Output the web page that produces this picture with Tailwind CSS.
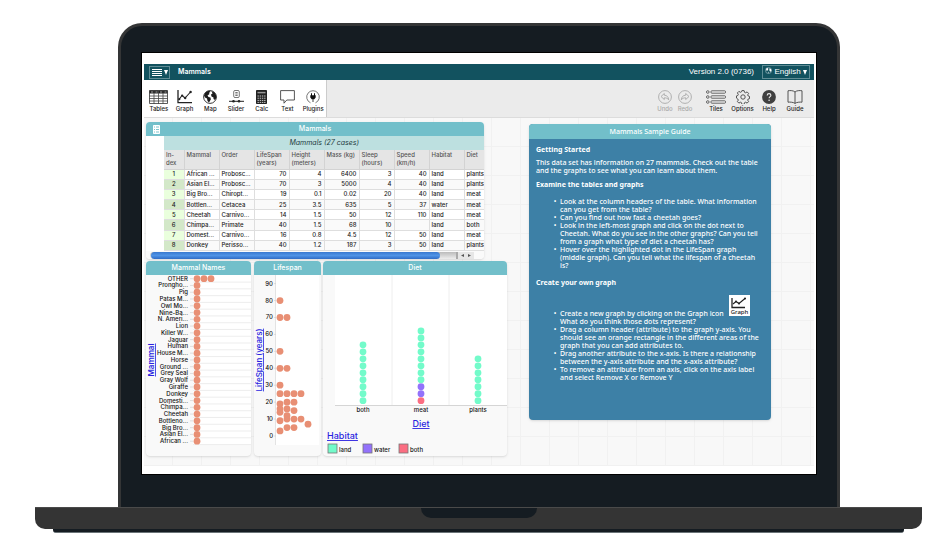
<!DOCTYPE html>
<html lang="en">
<head>
<meta charset="utf-8">
<meta name="viewport" content="width=device-width, initial-scale=1">
<title>Mammals</title>
<script src="https://cdn.jsdelivr.net/npm/@tailwindcss/browser@4"></script>
</head>
<body class="bg-white pt-[23px] pr-[19px] pl-[35px] font-['Inter',sans-serif] text-[7px] text-[#222]">

<!-- Laptop lid -->
<div class="mr-[82px] ml-[83px] rounded-t-[24px] border-3 border-b-0 border-[#343536] bg-[#151c22] px-5 pt-[26px] pb-8">
  <div class="border border-black bg-white px-0.5 pt-[11px] pb-2">

    <header class="flex h-4 items-center bg-[#12525f] pr-1 pl-[5px] text-white">
      <button aria-label="File menu" class="flex h-[13px] w-[21px] items-center justify-center gap-0.5 border border-[#5f8c95]">
        <svg class="h-[9px] w-2.5" viewBox="0 0 10 9" stroke="#fff" stroke-width="1"><path d="M0 1.500h10M0 3.500h10M0 5.500h10M0 7.500h10"/></svg>
        <svg class="h-[5px] w-1" viewBox="0 0 4 5" fill="#fff"><path d="M0 0h4L2 5z"/></svg>
      </button>
      <h1 class="ml-2 flex-1 font-semibold">Mammals</h1>
      <span class="mr-2 font-['Liberation_Sans',sans-serif] text-[8px]">Version 2.0 (0736)</span>
      <button class="flex h-3.5 w-12 items-center justify-center gap-0.5 border border-[#5f8c95] font-['Liberation_Sans',sans-serif] text-[8px]">
        <svg class="mb-1 size-[7px]" viewBox="0 0 8 8"><circle cx="4" cy="4" r="3.5" fill="none" stroke="#b9d0d4" stroke-width=".6"/><path d="M1 2l2-1 1 1-1 2-1 .5zM5 1.5l2 1 .4 2L6 5.500 5 4zM3.500 5l1 1-.5 1.300z" fill="#fff"/></svg>
        English
        <svg class="h-[5px] w-1" viewBox="0 0 4 5" fill="#fff"><path d="M0 0h4L2 5z"/></svg>
      </button>
    </header>

    <nav class="flex h-[38px] items-stretch border-b border-[#dcdcdc] bg-[#ebebeb] text-[6px] leading-[8px] font-medium">
      <div class="flex w-[183px] items-stretch border-r border-[#ccc] bg-white pl-0.5">
        <button class="flex flex-1 flex-col items-center pt-2.5">
          <svg class="h-[14px] w-[19px]" viewBox="0 0 19 14"><path d="M.5.5h18v13H.5z" fill="#fff" stroke="#333" stroke-width=".8"/><path d="M.5.500h18v3H.5z" fill="#222"/><path d="M2 2h2M6.500 2h2M11 2h2M15.500 2h2" stroke="#ddd" stroke-width=".7"/><path d="M5 0v14M9.500 0v14M14 0v14M0 6h19M0 8.500h19M0 11h19" stroke="#444" stroke-width=".8"/></svg>
          <span class="mt-px">Tables</span>
        </button>
        <button class="flex flex-1 flex-col items-center pt-2.5">
          <svg class="h-[14px] w-[15px]" viewBox="0 0 15 14" fill="none" stroke="#222"><path d="M1 0v12.700h14" stroke-width="1.300"/><path d="M2 9.500l3-4 3 2.500 5.500-6" stroke-width="1.100"/><g fill="#222" stroke="none"><circle cx="2.300" cy="9.200" r="1.100"/><circle cx="5.200" cy="5.500" r="1.100"/><circle cx="8.200" cy="8" r="1.200"/><circle cx="13.600" cy="2" r="1.200"/></g></svg>
          <span class="mt-px">Graph</span>
        </button>
        <button class="flex flex-1 flex-col items-center pt-2.5">
          <svg class="size-[14px]" viewBox="0 0 14 14"><circle cx="7" cy="7" r="6.400" fill="#fff" stroke="#222" stroke-width=".9"/><path d="M1 5.500C1.500 3 3.500 1 6 .8l1.500.7L6 3l.5 1-2 1.500L5.500 7l2 .5.300 2L6 12.500 4.500 11 4 8.500 2 7.500zM8.500 1l3 1.500L13 5l.3 3-1.300 2-1.500-1V7.500L8.500 6.500 8 4.500l1.500-1z" fill="#1c1c1c"/></svg>
          <span class="mt-px">Map</span>
        </button>
        <button class="flex flex-1 flex-col items-center pt-2.5">
          <svg class="h-[14px] w-[15px]" viewBox="0 0 15 14"><rect x="4.700" y=".5" width="5.600" height="7" rx="1.300" fill="#fff" stroke="#555" stroke-width=".8"/><path d="M6.300 2.500h2.400M6.300 4h2.400M6.300 5.500h2.400" stroke="#555" stroke-width=".8"/><path d="M0 11.300h15" stroke="#222" stroke-width="1"/><circle cx="4.500" cy="11.300" r="1.300" fill="#222"/><circle cx="10" cy="11.300" r="1.300" fill="#222"/></svg>
          <span class="mt-px">Slider</span>
        </button>
        <button class="flex flex-1 flex-col items-center pt-2.5">
          <svg class="h-[14px] w-[11px]" viewBox="0 0 11 14"><rect width="11" height="14" rx=".8" fill="#222"/><path d="M1.500 2.600h8" stroke="#999" stroke-width="1.500"/><path d="M1.500 6h8M1.500 8.200h8M1.500 10.400h8M1.500 12.400h8" stroke="#ddd" stroke-width=".9" stroke-dasharray="1.400 .8"/></svg>
          <span class="mt-px">Calc</span>
        </button>
        <button class="flex flex-1 flex-col items-center pt-2.5">
          <svg class="h-[14px] w-[15px]" viewBox="0 0 15 14" fill="#fff" stroke="#444" stroke-width=".9" stroke-linejoin="round"><path d="M.6.6h13.800v9.400H6.800L4 13.200V10H.6z"/></svg>
          <span class="mt-px">Text</span>
        </button>
        <button class="flex flex-1 flex-col items-center pt-2.5">
          <svg class="size-[14px]" viewBox="0 0 14 14"><path d="M4.500 12.800A6.300 6.300 0 1 1 9.500 12.800" fill="none" stroke="#555" stroke-width=".8"/><path d="M5 3.300h1v2h2v-2h1v2h.7v2.200L8.300 9.200H7.400V12h-.8V9.200H5.700L4.300 7.500V5.300H5z" fill="#111"/></svg>
          <span class="mt-px">Plugins</span>
        </button>
      </div>

      <div class="ml-auto flex items-stretch pr-1.5">
        <button disabled class="flex w-5 flex-col items-center pt-2.5 text-[#a9a9a9]">
          <svg class="size-[14px]" viewBox="0 0 14 14" fill="none" stroke="#a9a9a9" stroke-width=".9"><circle cx="7" cy="7" r="6.400"/><path d="M6.300 3.500L3 6.500l3.300 3V7.800c2 0 3.200.5 4.400 2C10.500 7 9 5.300 6.300 5.200z" stroke-linejoin="round"/></svg>
          <span class="mt-px">Undo</span>
        </button>
        <button disabled class="flex w-5 flex-col items-center pt-2.5 text-[#a9a9a9]">
          <svg class="size-[14px]" viewBox="0 0 14 14" fill="none" stroke="#a9a9a9" stroke-width=".9"><circle cx="7" cy="7" r="6.400"/><path d="M7.700 3.500l3.300 3-3.300 3V7.800c-2 0-3.200.5-4.400 2C3.500 7 5 5.300 7.700 5.200z" stroke-linejoin="round"/></svg>
          <span class="mt-px">Redo</span>
        </button>
        <button class="ml-2 flex w-[26px] flex-col items-center pt-2.5">
          <svg class="h-[14px] w-5" viewBox="0 0 20 14" fill="#eee" stroke="#444" stroke-width=".8"><circle cx="1.800" cy="2" r="1.300"/><circle cx="1.800" cy="7" r="1.300"/><circle cx="1.800" cy="12" r="1.300"/><rect x="5" y=".8" width="14.500" height="2.400" rx=".8"/><rect x="5" y="5.800" width="14.500" height="2.400" rx=".8"/><rect x="5" y="10.800" width="14.500" height="2.400" rx=".8"/></svg>
          <span class="mt-px">Tiles</span>
        </button>
        <button class="flex w-[27px] flex-col items-center pt-2.5">
          <svg class="size-[14px]" viewBox="0 0 14 14" fill="none" stroke="#444" stroke-width=".9" stroke-linejoin="round"><path d="M5.900.6h2.200l.4 1.700 1.100.5 1.500-.9 1.500 1.500-.9 1.500.5 1.100 1.300.4v2.200l-1.300.4-.5 1.100.9 1.500-1.500 1.500-1.500-.9-1.100.5-.4 1.700H5.900l-.4-1.700-1.100-.5-1.500.9-1.500-1.500.9-1.500-.5-1.100L.5 8.100V5.900l1.300-.4.5-1.100-.9-1.500 1.500-1.500 1.500.9 1.100-.5z"/><circle cx="7" cy="7" r="2.200"/></svg>
          <span class="mt-px">Options</span>
        </button>
        <button class="flex w-[26px] flex-col items-center pt-2.5">
          <svg class="size-[14px]" viewBox="0 0 14 14"><circle cx="7" cy="7" r="6.900" fill="#404040"/><path d="M5.200 5.500c0-2.600 3.700-2.400 3.700-.2C8.900 6.700 7.200 6.700 7.100 8.300" fill="none" stroke="#ebebeb" stroke-width="1.100"/><circle cx="7.100" cy="10.200" r=".8" fill="#ebebeb"/></svg>
          <span class="mt-px">Help</span>
        </button>
        <button class="flex w-[26px] flex-col items-center pt-2.5">
          <svg class="h-[14px] w-4" viewBox="0 0 16 14" fill="none" stroke="#444" stroke-width=".9" stroke-linejoin="round"><path d="M8 2C6.500.5 3 .3 1 .8v11.400c2-.3 5.500 0 7 1.200 1.500-1.200 5-1.500 7-1.200V.8C13 .3 9.500.5 8 2zM8 2v11.400"/></svg>
          <span class="mt-px">Guide</span>
        </button>
      </div>
    </nav>

    <main class="relative h-[348px] overflow-hidden bg-[#f8f8f8] bg-[linear-gradient(to_right,transparent_28px,#f1f1f1_28px),linear-gradient(to_bottom,transparent_28px,#f1f1f1_28px)] bg-[size:29px_29px]">

      <section class="absolute top-1 left-0.5 w-[338px] overflow-hidden rounded-[4px] bg-white shadow-sm">
        <header class="relative flex h-3.5 items-center justify-center bg-[#72bfca] font-medium text-white">
          <button aria-label="Switch to case card" class="absolute left-[7px]">
            <svg class="h-[9px] w-[7px]" viewBox="0 0 7 9"><rect width="7" height="9" rx=".8" fill="#fff"/><path d="M1 2h1M1 4.500h1M1 7h1M3 2h3M3 4.500h3M3 7h3" stroke="#72bfca" stroke-width=".9"/></svg>
          </button>
          <h2>Mammals</h2>
        </header>
        <div class="overflow-hidden pl-[18px]">
          <table class="h-[101px] w-[335px] table-fixed border-collapse text-[6px] leading-[8px] font-medium">
            <caption class="h-3.5 bg-[#bde0e0] pr-[15px] text-[7px] leading-[14px] font-normal text-[#1d3b3e] italic">Mammals (27 cases)</caption>
            <colgroup><col class="w-5"><col class="w-[35px]"><col class="w-[35px]"><col class="w-[35px]"><col class="w-[35px]"><col class="w-[35px]"><col class="w-[35px]"><col class="w-[35px]"><col class="w-[35px]"><col class="w-[35px]"></colgroup>
            <thead id="head"></thead>
            <tbody id="cases"></tbody>
          </table>
        </div>
        <div class="flex h-2 items-center bg-[#fafafa] pl-1">
          <div class="flex h-[7px] w-[308px] rounded-l-full border-r-2 border-[#aaa] bg-gradient-to-b from-[#bbb] to-[#eee]">
            <div class="ml-px w-[289px] rounded-full bg-gradient-to-b from-[#3878cf] via-[#4f93e6] to-[#2f6cc6]"></div>
          </div>
          <svg class="h-[7px] w-4" viewBox="0 0 16 7"><path d="M0 0h16v7H0z" fill="#e6e6e6"/><path d="M6 2v3L3 3.500zM10 2v3l3-1.500z" fill="#555"/></svg>
        </div>
      </section>

      <section class="absolute top-[143px] left-0.5 w-[105px] overflow-hidden rounded-[4px] bg-[#f9f9f9] shadow-sm">
        <h2 class="h-3.5 bg-[#72bfca] text-center leading-[14px] font-medium text-white">Mammal Names</h2>
        <svg id="names" class="block h-[181px] w-full" viewBox="0 0 105 181"><rect x="47" width="58" height="170" fill="#fff"/></svg>
      </section>

      <section class="absolute top-[143px] left-[110px] w-[67px] overflow-hidden rounded-[4px] bg-[#f9f9f9] shadow-sm">
        <h2 class="h-3.5 bg-[#72bfca] text-center leading-[14px] font-medium text-white">Lifespan</h2>
        <svg id="lifespan" class="block h-[181px] w-full" viewBox="0 0 67 181"><rect x="22" width="43" height="170" fill="#fff"/><path d="M21.500 0v170" stroke="#ddd" stroke-width=".8"/></svg>
      </section>

      <section class="absolute top-[143px] left-[179px] w-[184px] overflow-hidden rounded-[4px] bg-[#f9f9f9] shadow-sm">
        <h2 class="h-3.5 bg-[#72bfca] text-center leading-[14px] font-medium text-white">Diet</h2>
        <svg id="diet" class="block h-[181px] w-full" viewBox="0 0 184 181"><rect x="12" width="172" height="130" fill="#fff"/><path d="M69 0v130M126 0v130" stroke="#eee"/><path d="M12 130.500h172" stroke="#d5d5d5"/></svg>
      </section>

      <section class="absolute top-1.5 left-[385px] h-[296px] w-[242px] overflow-hidden rounded-[4px] bg-[#3d80a6] font-['Noto_Sans',sans-serif] leading-[8px] font-medium text-white shadow-sm">
        <h2 class="h-[15px] bg-[#72bfca] text-center leading-[15px]">Mammals Sample Guide</h2>
        <div class="px-[7px] pt-[7px]">
          <h3 class="font-bold">Getting Started</h3>
          <p class="mt-[5px]">This data set has information on 27 mammals. Check out the table<br>and the graphs to see what you can learn about them.</p>
          <h3 class="mt-1.5 font-bold">Examine the tables and graphs</h3>
          <ul class="mt-[9px] list-['•__'] pl-6 whitespace-nowrap">
            <li>Look at the column headers of the table. What information<br>can you get from the table?</li>
            <li>Can you find out how fast a cheetah goes?</li>
            <li>Look in the left-most graph and click on the dot next to<br>Cheetah. What do you see in the other graphs? Can you tell<br>from a graph what type of diet a cheetah has?</li>
            <li>Hover over the highlighted dot in the LifeSpan graph<br>(middle graph). Can you tell what the lifespan of a cheetah<br>is?</li>
          </ul>
          <h3 class="mt-[9px] font-bold">Create your own graph</h3>
          <ul class="mt-2 list-['•__'] pl-6 whitespace-nowrap">
            <li>Create a new graph by clicking on the Graph icon
              <svg class="ml-1 inline h-[21px] w-[21px] align-baseline" viewBox="0 0 21 21"><path d="M0 0h21v21H0z" fill="#fff"/><path d="M3 3v9.500h13" fill="none" stroke="#222" stroke-width="1.300"/><path d="M4 9l3-2.500L10 8.500l6-5" fill="none" stroke="#222" stroke-width="1.100"/><circle cx="7" cy="6.500" r="1" fill="#222"/><circle cx="10" cy="8.500" r="1.100" fill="#222"/><circle cx="16" cy="3.500" r="1.100" fill="#222"/><text x="10.500" y="18.500" text-anchor="middle" font-size="6" fill="#222">Graph</text></svg><br>What do you think those dots represent?</li>
            <li>Drag a column header (attribute) to the graph y-axis. You<br>should see an orange rectangle in the different areas of the<br>graph that you can add attributes to.</li>
            <li>Drag another attribute to the x-axis. Is there a relationship<br>between the y-axis attribute and the x-axis attribute?</li>
            <li>To remove an attribute from an axis, click on the axis label<br>and select Remove X or Remove Y</li>
          </ul>
        </div>
      </section>
    </main>
  </div>
</div>

<!-- Laptop base -->
<div class="flex h-[22px] justify-center rounded-b-[10px] border-t border-[#4a4a4a] bg-[#343434]">
  <div class="h-2.5 w-[116px] rounded-b-[10px] bg-[#151c22]"></div>
</div>
<div class="mx-[18px] h-1 rounded-b-[3px] border-b border-[#6b7478] bg-[#151c22]"></div>

<script>
const columns = ['In-<br>dex', 'Mammal', 'Order', 'LifeSpan<br>(years)', 'Height<br>(meters)', 'Mass (kg)', 'Sleep<br>(hours)', 'Speed<br>(km/h)', 'Habitat', 'Diet'];
const cases = [
  [1, 'African ...', 'Probosc...', 70, 4, 6400, 3, 40, 'land', 'plants'],
  [2, 'Asian El...', 'Probosc...', 70, 3, 5000, 4, 40, 'land', 'plants'],
  [3, 'Big Bro...', 'Chiropt...', 19, 0.1, 0.02, 20, 40, 'land', 'meat'],
  [4, 'Bottlen...', 'Cetacea', 25, 3.5, 635, 5, 37, 'water', 'meat'],
  [5, 'Cheetah', 'Carnivo...', 14, 1.5, 50, 12, 110, 'land', 'meat'],
  [6, 'Chimpa...', 'Primate', 40, 1.5, 68, 10, '', 'land', 'both'],
  [7, 'Domest...', 'Carnivo...', 16, 0.8, 4.5, 12, 50, 'land', 'meat'],
  [8, 'Donkey', 'Perisso...', 40, 1.2, 187, 3, 50, 'land', 'plants'],
];
document.getElementById('head').innerHTML = '<tr class="h-[19px] bg-[#e5e5e5] text-[#555]">' +
  columns.map(c => `<th scope="col" class="border-r border-b border-[#d3d3d3] px-0.5 pt-px pb-0 text-left align-top font-medium whitespace-nowrap">${c}</th>`).join('') + '</tr>';
document.getElementById('cases').innerHTML = cases.map((row, r) =>
  `<tr class="${r % 2 ? 'bg-[#fafafa]' : 'bg-white'}">` + row.map((v, i) => {
    const look = i === 0 ? (r % 2 ? 'bg-[#d3e8c8] text-center' : 'bg-[#eaffdd] text-center') : i > 2 && i < 8 ? 'text-right' : 'text-left';
    return `<td class="border-r border-b border-[#dedede] px-0.5 py-0 whitespace-nowrap ${look}">${v}</td>`;
  }).join('') + '</tr>').join('');

const dot = (x, y, fill) => `<circle cx="${x}" cy="${y}" r="3.400" fill="${fill}"/>`;
const add = (id, s) => document.getElementById(id).insertAdjacentHTML('beforeend', s);
const orange = '#e88f74';

const names = ['OTHER', 'Prongho...', 'Pig', 'Patas M...', 'Owl Mo...', 'Nine-Ba...', 'N. Ameri...', 'Lion', 'Killer W...', 'Jaguar', 'Human', 'House M...', 'Horse', 'Ground ...', 'Grey Seal', 'Gray Wolf', 'Giraffe', 'Donkey', 'Domesti...', 'Chimpa...', 'Cheetah', 'Bottleno...', 'Big Bro...', 'Asian El...', 'African ...'];
const pitch = 6.77;
add('names', names.map((n, i) => {
  const y = 3.700 + i * pitch;
  return `<path d="M47 ${y + pitch / 2}h58" stroke="#e8e8e8" stroke-width=".8"/><path d="M44 ${y}h3" stroke="#ccc" stroke-width=".6"/>` +
    `<text x="42" y="${y + 2}" text-anchor="end" font-size="6" font-weight="500" fill="#111">${n}</text>` +
    (i ? [51] : [51, 58, 65]).map(x => dot(x, y, orange)).join('');
}).join('') + '<a href="#"><text transform="translate(8 85) rotate(-90)" text-anchor="middle" font-size="8" font-weight="600" fill="#2a1fe0" text-decoration="underline">Mammal</text></a>');

const spans = { 80: [0], 70: [0, 1], 50: [0], 40: [0, 1], 30: [0], 25: [0, 1, 2, 3], 20: [1, 2], 19: [0], 16: [0, 1], 15: [2], 14: [0], 12: [1], 10: [1, 2, 3], 9: [0], 7: [4], 5: [1, 2], 3: [0] };
const yOf = v => 161 - v * 1.693;
let life = '';
for (let v = 0; v <= 90; v += 10) life += `<path d="M20 ${yOf(v)}h2" stroke="#ccc" stroke-width=".6"/><text x="19" y="${yOf(v) + 2}" text-anchor="end" font-size="6" font-weight="500" fill="#111">${v}</text>`;
for (const v in spans) life += spans[v].map(c => dot(26 + 7 * c, yOf(v), orange)).join('');
add('lifespan', life + '<a href="#"><text transform="translate(8 85) rotate(-90)" text-anchor="middle" font-size="8" font-weight="500" fill="#2a1fe0" text-decoration="underline">LifeSpan (years)</text></a>');

const land = '#73fbca', water = '#9372fb', both = '#fb6e82';
const groups = [['both', 40, Array(9).fill(land)], ['meat', 98, [both, water, water, ...Array(8).fill(land)]], ['plants', 155, Array(7).fill(land)]];
add('diet', groups.map(([n, x, dots]) => dots.map((c, i) => dot(x, 125.700 - i * 6.980, c)).join('') +
  `<text x="${x}" y="137" text-anchor="middle" font-size="6" font-weight="500" fill="#111">${n}</text>`).join('') +
  '<a href="#"><text x="98" y="152" text-anchor="middle" font-size="9" font-weight="500" fill="#2a1fe0" text-decoration="underline">Diet</text></a>' +
  '<a href="#"><text x="4" y="164" font-size="9" font-weight="500" fill="#2a1fe0" text-decoration="underline">Habitat</text></a>' +
  [['land', 5, land], ['water', 40, water], ['both', 76, both]].map(([n, x, c]) =>
    `<rect x="${x}" y="169" width="9" height="9" fill="${c}" stroke="#777" stroke-width=".8"/><text x="${x + 11}" y="177" font-size="6" font-weight="500" fill="#111">${n}</text>`).join(''));
</script>
</body>
</html>
